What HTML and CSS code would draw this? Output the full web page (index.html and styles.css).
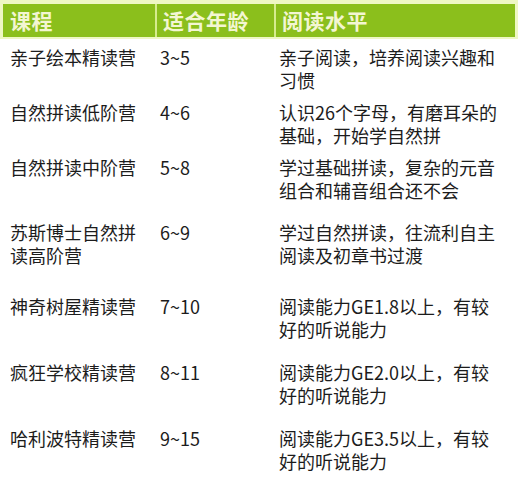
FILE: index.html
```html
<!DOCTYPE html>
<html lang="zh-CN">
<head>
<meta charset="utf-8">
<link rel="stylesheet" href="styles.css">
</head>
<body>
<div class="table">
  <div class="head">
    <div class="hcell c1">课程</div>
    <div class="hcell c2">适合年龄</div>
    <div class="hcell c3">阅读水平</div>
  </div>
  <div class="rows">
    <div class="cell c1">亲子绘本精读营</div>
    <div class="cell c2">3~5</div>
    <div class="cell c3">亲子阅读，培养阅读兴趣和<br>习惯</div>

    <div class="cell c1">自然拼读低阶营</div>
    <div class="cell c2">4~6</div>
    <div class="cell c3">认识26个字母，有磨耳朵的<br>基础，开始学自然拼</div>

    <div class="cell c1">自然拼读中阶营</div>
    <div class="cell c2">5~8</div>
    <div class="cell c3">学过基础拼读，复杂的元音<br>组合和辅音组合还不会</div>

    <div class="cell c1">苏斯博士自然拼<br>读高阶营</div>
    <div class="cell c2">6~9</div>
    <div class="cell c3">学过自然拼读，往流利自主<br>阅读及初章书过渡</div>

    <div class="cell c1">神奇树屋精读营</div>
    <div class="cell c2">7~10</div>
    <div class="cell c3">阅读能力GE1.8以上，有较<br>好的听说能力</div>

    <div class="cell c1">疯狂学校精读营</div>
    <div class="cell c2">8~11</div>
    <div class="cell c3">阅读能力GE2.0以上，有较<br>好的听说能力</div>

    <div class="cell c1">哈利波特精读营</div>
    <div class="cell c2">9~15</div>
    <div class="cell c3">阅读能力GE3.5以上，有较<br>好的听说能力</div>
  </div>
</div>
</body>
</html>
```
FILE: styles.css
```css
html, body {
  margin: 0;
  padding: 0;
  background: #ffffff;
}
body {
  width: 518px;
  height: 477px;
  overflow: hidden;
  font-family: "Noto Sans CJK SC", "Noto Sans", sans-serif;
  color: #1c1c1c;
}
.table {
  width: 518px;
}
.head {
  display: grid;
  grid-template-columns: 152px 119px 1fr;
  height: 39px;
  box-sizing: border-box;
  border: 3px solid #eef7c4;
  border-top-width: 4px;
  border-bottom-width: 2px;
  background: #8bbf1c;
}
.hcell {
  font-size: 21px;
  font-weight: bold;
  color: #f3f6d2;
  line-height: 32px;
  padding-left: 7px;
  letter-spacing: 0.5px;
}
.hcell.c2, .hcell.c3 {
  border-left: 2px solid #d6ec8e;
}
.hcell.c2 { padding-left: 6px; }
.hcell.c3 { padding-left: 6px; }
.rows {
  display: grid;
  grid-template-columns: 152px 119px 1fr;
  grid-template-rows: 55px 55px 65px 74px 66px 66px auto;
}
.cell {
  font-size: 18px;
  line-height: 23px;
  padding-top: 7px;
}
.cell.c1 { padding-left: 10px; }
.cell.c2 { padding-left: 8px; }
.cell.c3 { padding-left: 8px; }
```
